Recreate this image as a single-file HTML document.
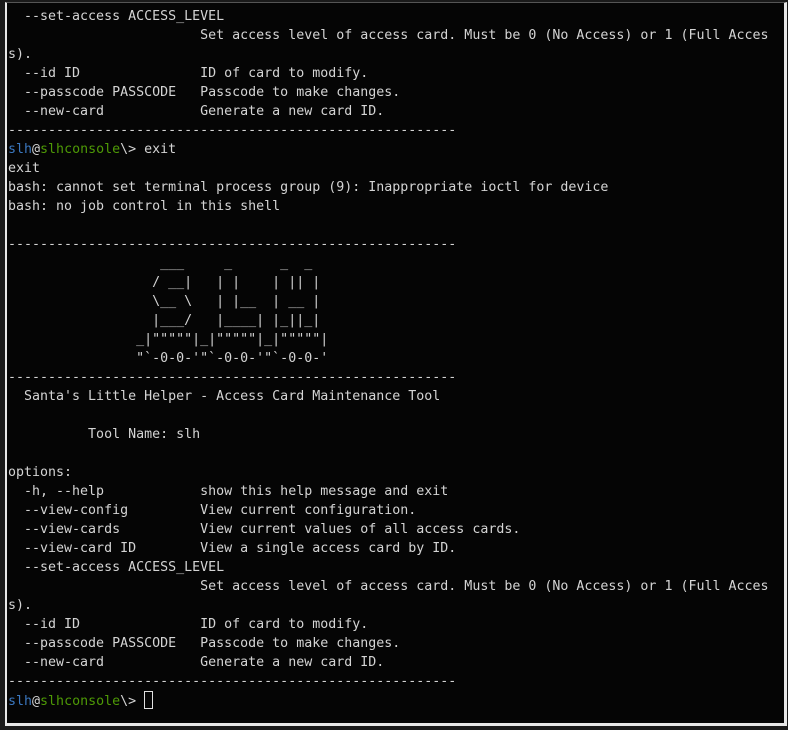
<!DOCTYPE html>
<html><head><meta charset="utf-8"><style>
html,body{margin:0;padding:0;background:#1a1a1a;width:788px;height:730px;overflow:hidden}
#t{position:absolute;left:5px;top:2px;width:777px;height:720px;background:#050505;border-left:2px solid #e8e8e8;border-right:3px solid #e8e8e8;border-bottom:3px solid #e8e8e8;border-top:1px solid #555}
pre{position:absolute;left:8px;top:7px;margin:0;font-family:"DejaVu Sans Mono","Liberation Mono",monospace;font-size:13.3px;line-height:19px;color:#d4d4d4;white-space:pre}
.b{color:#3b78c0}.g{color:#4e9a06}
.c{display:inline-block;width:7px;height:16px;border:1px solid #e0e0e0;vertical-align:-4px}
</style></head><body><div id="t"></div><pre>  --set-access ACCESS_LEVEL
                        Set access level of access card. Must be 0 (No Access) or 1 (Full Acces
s).
  --id ID               ID of card to modify.
  --passcode PASSCODE   Passcode to make changes.
  --new-card            Generate a new card ID.
--------------------------------------------------------
<span class="b">slh</span>@<span class="g">slhconsole</span>\&gt; exit
exit
bash: cannot set terminal process group (9): Inappropriate ioctl for device
bash: no job control in this shell

--------------------------------------------------------
                   ___     _      _  _
                  / __|   | |    | || |
                  \__ \   | |__  | __ |
                  |___/   |____| |_||_|
                _|"""""|_|"""""|_|"""""|
                "`-0-0-'"`-0-0-'"`-0-0-'
--------------------------------------------------------
  Santa's Little Helper - Access Card Maintenance Tool

          Tool Name: slh

options:
  -h, --help            show this help message and exit
  --view-config         View current configuration.
  --view-cards          View current values of all access cards.
  --view-card ID        View a single access card by ID.
  --set-access ACCESS_LEVEL
                        Set access level of access card. Must be 0 (No Access) or 1 (Full Acces
s).
  --id ID               ID of card to modify.
  --passcode PASSCODE   Passcode to make changes.
  --new-card            Generate a new card ID.
--------------------------------------------------------
<span class="b">slh</span>@<span class="g">slhconsole</span>\&gt; <span class="c"></span></pre></body></html>
